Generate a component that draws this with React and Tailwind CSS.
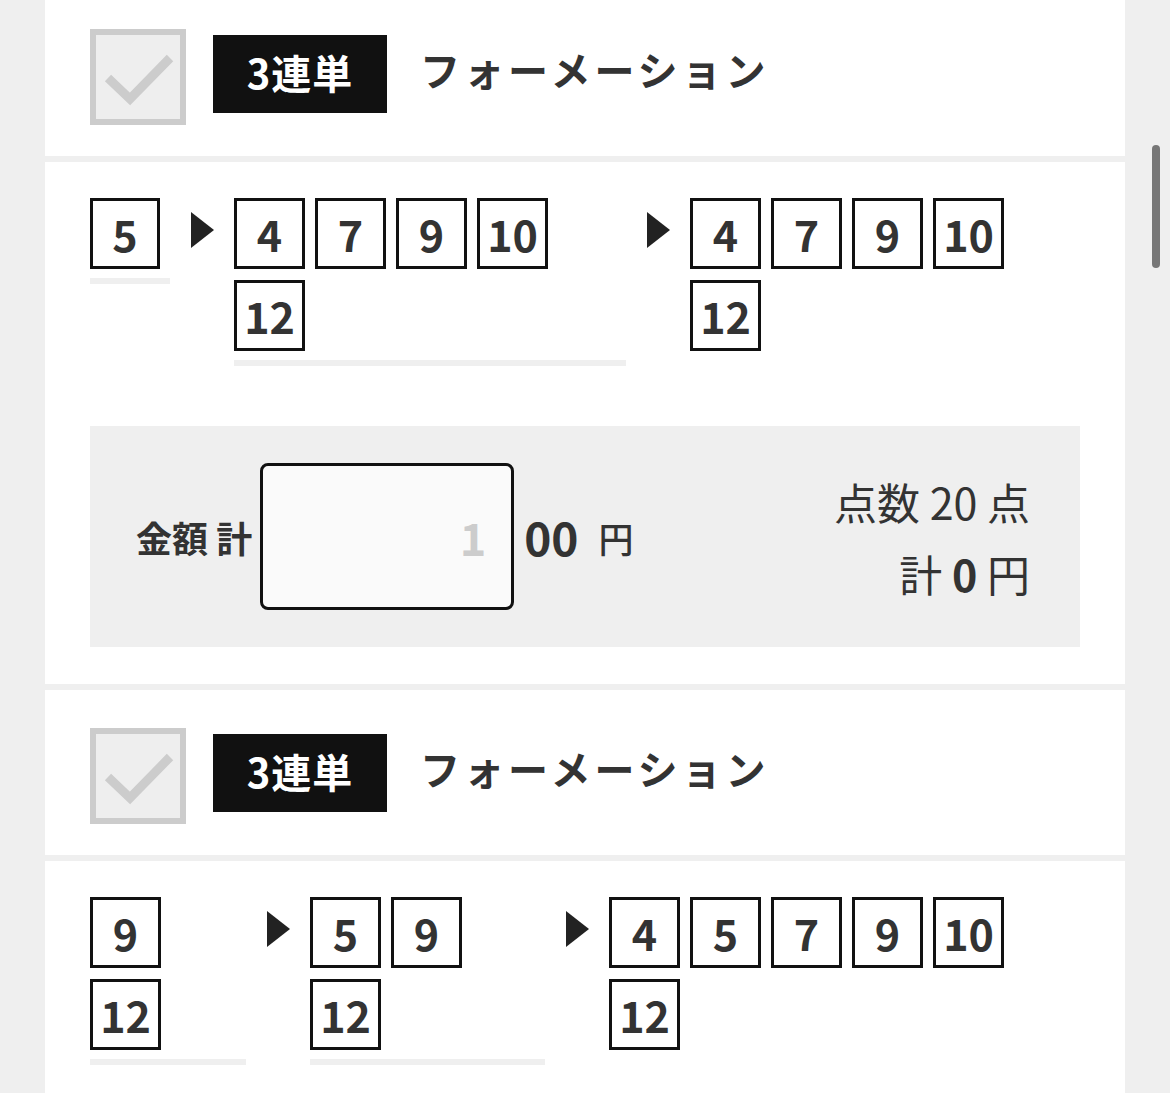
import React from "react";

const FONT = { fontFamily: '"Noto Sans CJK JP", "Noto Sans", sans-serif' };

function Box({ n }) {
  return (
    <div className="mr-[10px] flex h-[71px] w-[71px] items-center justify-center border-[3px] border-[#111] bg-white pb-[1px] text-[43px] font-bold leading-none text-[#333]">
      {n}
    </div>
  );
}

function Column({ nums, width, line = true }) {
  return (
    <div className={width}>
      <div className="flex flex-wrap gap-y-[11px]">
        {nums.map((n, i) => (
          <Box key={i} n={n} />
        ))}
      </div>
      {line && <div className="mt-[9px] h-[6px] bg-[#efefef]" />}
    </div>
  );
}

function Arrow() {
  return (
    <div className="shrink-0 pl-[21px] pr-[20px] pt-[14px]">
      <svg width="23" height="36" viewBox="0 0 23 36">
        <polygon points="0,0 23,18 0,36" fill="#222" />
      </svg>
    </div>
  );
}

function Header({ top }) {
  return (
    <div className={`flex items-start bg-white pl-[45px] pb-[31px] ${top}`}>
      <div className="relative h-[96px] w-[96px] shrink-0 border-[6px] border-[#ccc] bg-[#eee]">
        <svg className="absolute left-[-6px] top-[-6px]" width="96" height="96" viewBox="0 0 96 96">
          <polyline points="18,49 40,70 80,29" fill="none" stroke="#ccc" strokeWidth="9" />
        </svg>
      </div>
      <div className="ml-[27px] mt-[6px] flex h-[78px] w-[174px] items-center justify-center bg-[#111] pb-[5px] text-[40px] font-bold tracking-[1px] text-white">
        3連単
      </div>
      <div className="ml-[33px] mt-[6px] flex h-[78px] items-center pb-[10px] text-[40px] font-bold tracking-[4px] text-[#333]">
        フォーメーション
      </div>
    </div>
  );
}

export default function App() {
  return (
    <div className="relative h-[1093px] overflow-hidden bg-[#efefef]" style={FONT}>
      <div className="mr-[45px] ml-[45px] flex flex-col gap-[6px]">
        <Header top="pt-[29px]" />

        {/* 1つ目 */}
        <div className="bg-white px-[45px] pt-[36px] pb-[37px]">
          <div className="flex items-start">
            <Column nums={[5]} width="w-[80px]" />
            <Arrow />
            <Column nums={[4, 7, 9, 10, 12]} width="w-[392px]" />
            <Arrow />
            <Column nums={[4, 7, 9, 10, 12]} width="flex-1" line={false} />
          </div>

          <div className="mt-[60px] flex h-[221px] items-center justify-between bg-[#efefef] pl-[46px] pr-[50px]">
            <div className="flex items-center">
              <span className="text-[36px] font-bold text-[#333]">金額 計</span>
              <div className="ml-[8px] flex h-[147px] w-[254px] items-center justify-end rounded-[8px] border-[3px] border-[#111] bg-[#fafafa] pr-[25px] text-[45px] font-bold text-[#ccc]">
                1
              </div>
              <span className="ml-[10px] text-[46px] font-bold text-[#333]">00</span>
              <span className="ml-[20px] pt-[4px] text-[35px] font-medium text-[#333]">円</span>
            </div>
            <div className="flex flex-col items-end gap-[2px] text-[43px] leading-[70px] text-[#333]">
              <div>点数 20 点</div>
              <div>
                計 <span className="font-bold">0</span> 円
              </div>
            </div>
          </div>
        </div>

        <Header top="pt-[38px]" />

        {/* 2つ目 */}
        <div className="bg-white px-[45px] pt-[36px] pb-[37px]">
          <div className="flex items-start">
            <Column nums={[9, 12]} width="w-[156px]" />
            <Arrow />
            <Column nums={[5, 9, 12]} width="w-[235px]" />
            <Arrow />
            <Column nums={[4, 5, 7, 9, 10, 12]} width="flex-1" line={false} />
          </div>
        </div>
      </div>

      {/* スクロールバー */}
      <div className="absolute left-[1152px] top-[145px] h-[123px] w-[8px] rounded-full bg-[#777]" />
    </div>
  );
}
